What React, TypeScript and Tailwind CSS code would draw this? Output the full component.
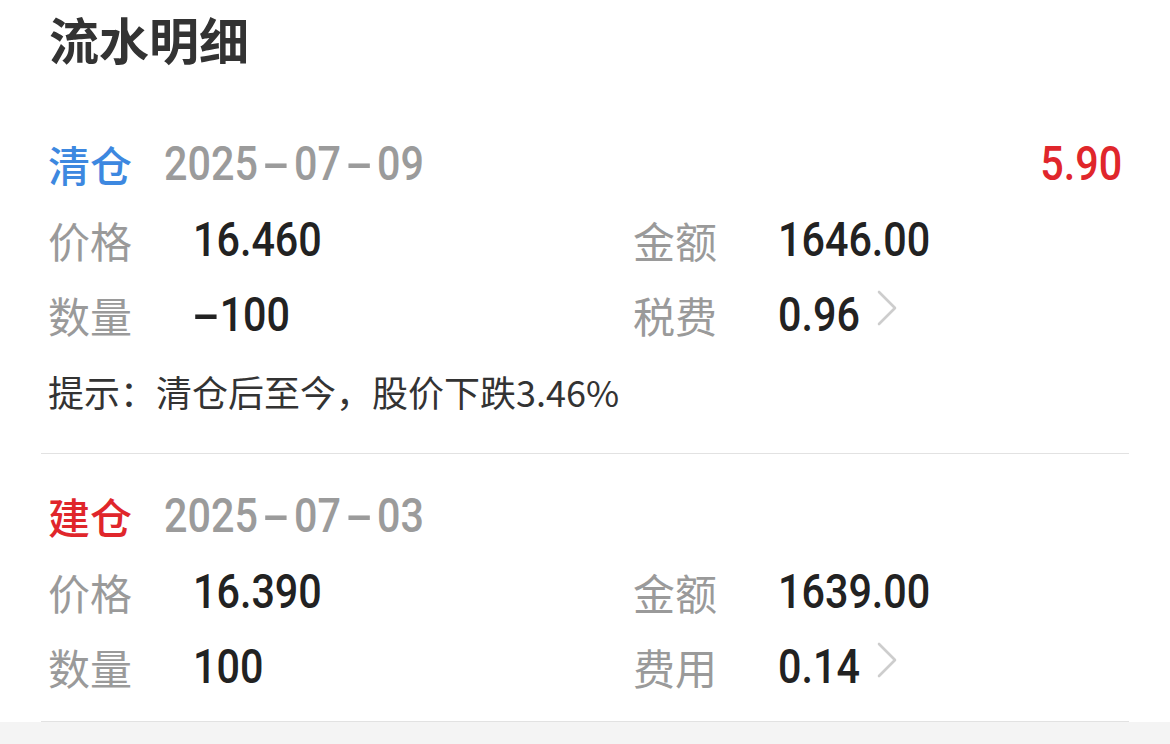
import { ReactNode } from "react";

const num = { fontFamily: 'Roboto, "Noto Sans", sans-serif' };
const cjk = { fontFamily: '"Noto Sans CJK SC", "Noto Sans", sans-serif' };

// digits in the screenshot are a narrow DIN-like face: squeeze Roboto and widen the dashes
function Num({ text, className = "", right }: { text: string; className?: string; right?: boolean }) {
  return (
    <span
      className={`inline-block whitespace-nowrap text-[48px] font-medium leading-none scale-x-[0.86] ${right ? "origin-right" : "origin-left"} ${className}`}
      style={num}
    >
      {text.split("").map((c, i) =>
        c === "-" ? (
          <span key={i} className={`inline-block text-center ${i === 0 ? "w-[31px]" : "w-[42px]"}`}>
            <span className="inline-block scale-x-[2]">-</span>
          </span>
        ) : (
          c
        )
      )}
    </span>
  );
}

function Chevron() {
  return (
    <svg width="26" height="38" viewBox="0 0 26 38" className="mb-[14px]">
      <path d="M5 3 L21 19 L5 35" fill="none" stroke="#cdcdcd" strokeWidth="2.6" strokeLinecap="round" strokeLinejoin="round" />
    </svg>
  );
}

function Cell({ label, value, arrow }: { label: string; value: string; arrow?: boolean }) {
  return (
    <div className="flex items-center">
      <span className="w-[145px] text-[42px] text-[#9a9a9a] leading-none" style={cjk}>
        {label}
      </span>
      <div className="w-[96px] shrink-0">
        <Num text={value} className="text-[#222]" />
      </div>
      {arrow && <Chevron />}
    </div>
  );
}

function Row({ children }: { children: ReactNode }) {
  return <div className="grid grid-cols-[585px_1fr] h-[75px] items-center">{children}</div>;
}

type Trade = {
  kind: string;
  color: string;
  date: string;
  profit?: string;
  price: string;
  qty: string;
  amount: string;
  feeLabel: string;
  fee: string;
  hint?: string;
};

const trades: Trade[] = [
  {
    kind: "清仓",
    color: "text-[#3d88e0]",
    date: "2025-07-09",
    profit: "5.90",
    price: "16.460",
    qty: "-100",
    amount: "1646.00",
    feeLabel: "税费",
    fee: "0.96",
    hint: "提示：清仓后至今，股价下跌3.46%",
  },
  {
    kind: "建仓",
    color: "text-[#e0262b]",
    date: "2025-07-03",
    price: "16.390",
    qty: "100",
    amount: "1639.00",
    feeLabel: "费用",
    fee: "0.14",
  },
];

export default function App() {
  return (
    <div className="w-[1170px] min-h-[744px] bg-[#f4f4f4]">
      <div className="bg-white">
        {/* title */}
        <div className="h-[84px] flex items-center px-[49px] pb-[9px]">
          <h1 className="text-[50px] font-bold text-[#333] leading-none" style={cjk}>
            流水明细
          </h1>
        </div>

        <div className="mx-[41px]">
          {trades.map((t, i) => (
            <div
              key={t.date}
              className={`border-b border-[#e2e2e2] px-[7px] ${i === 0 ? "pt-[41px] pb-[23px]" : "pt-[23px] pb-[17px]"}`}
            >
              {/* header */}
              <div className="h-[77px] flex items-center">
                <span className={`text-[42px] font-medium leading-none ${t.color}`} style={cjk}>
                  {t.kind}
                </span>
                <span className="ml-[32px]">
                  <Num text={t.date} className="text-[#9b9b9b]" />
                </span>
                {t.profit && (
                  <span className="ml-auto">
                    <Num text={t.profit} className="text-[#e0262b]" right />
                  </span>
                )}
              </div>

              <Row>
                <Cell label="价格" value={t.price} />
                <Cell label="金额" value={t.amount} />
              </Row>
              <Row>
                <Cell label="数量" value={t.qty} />
                <Cell label={t.feeLabel} value={t.fee} arrow />
              </Row>

              {t.hint && (
                <div className="h-[78px] flex items-center text-[36px] text-[#333] leading-none" style={cjk}>
                  {t.hint}
                </div>
              )}
            </div>
          ))}
        </div>
      </div>
    </div>
  );
}
